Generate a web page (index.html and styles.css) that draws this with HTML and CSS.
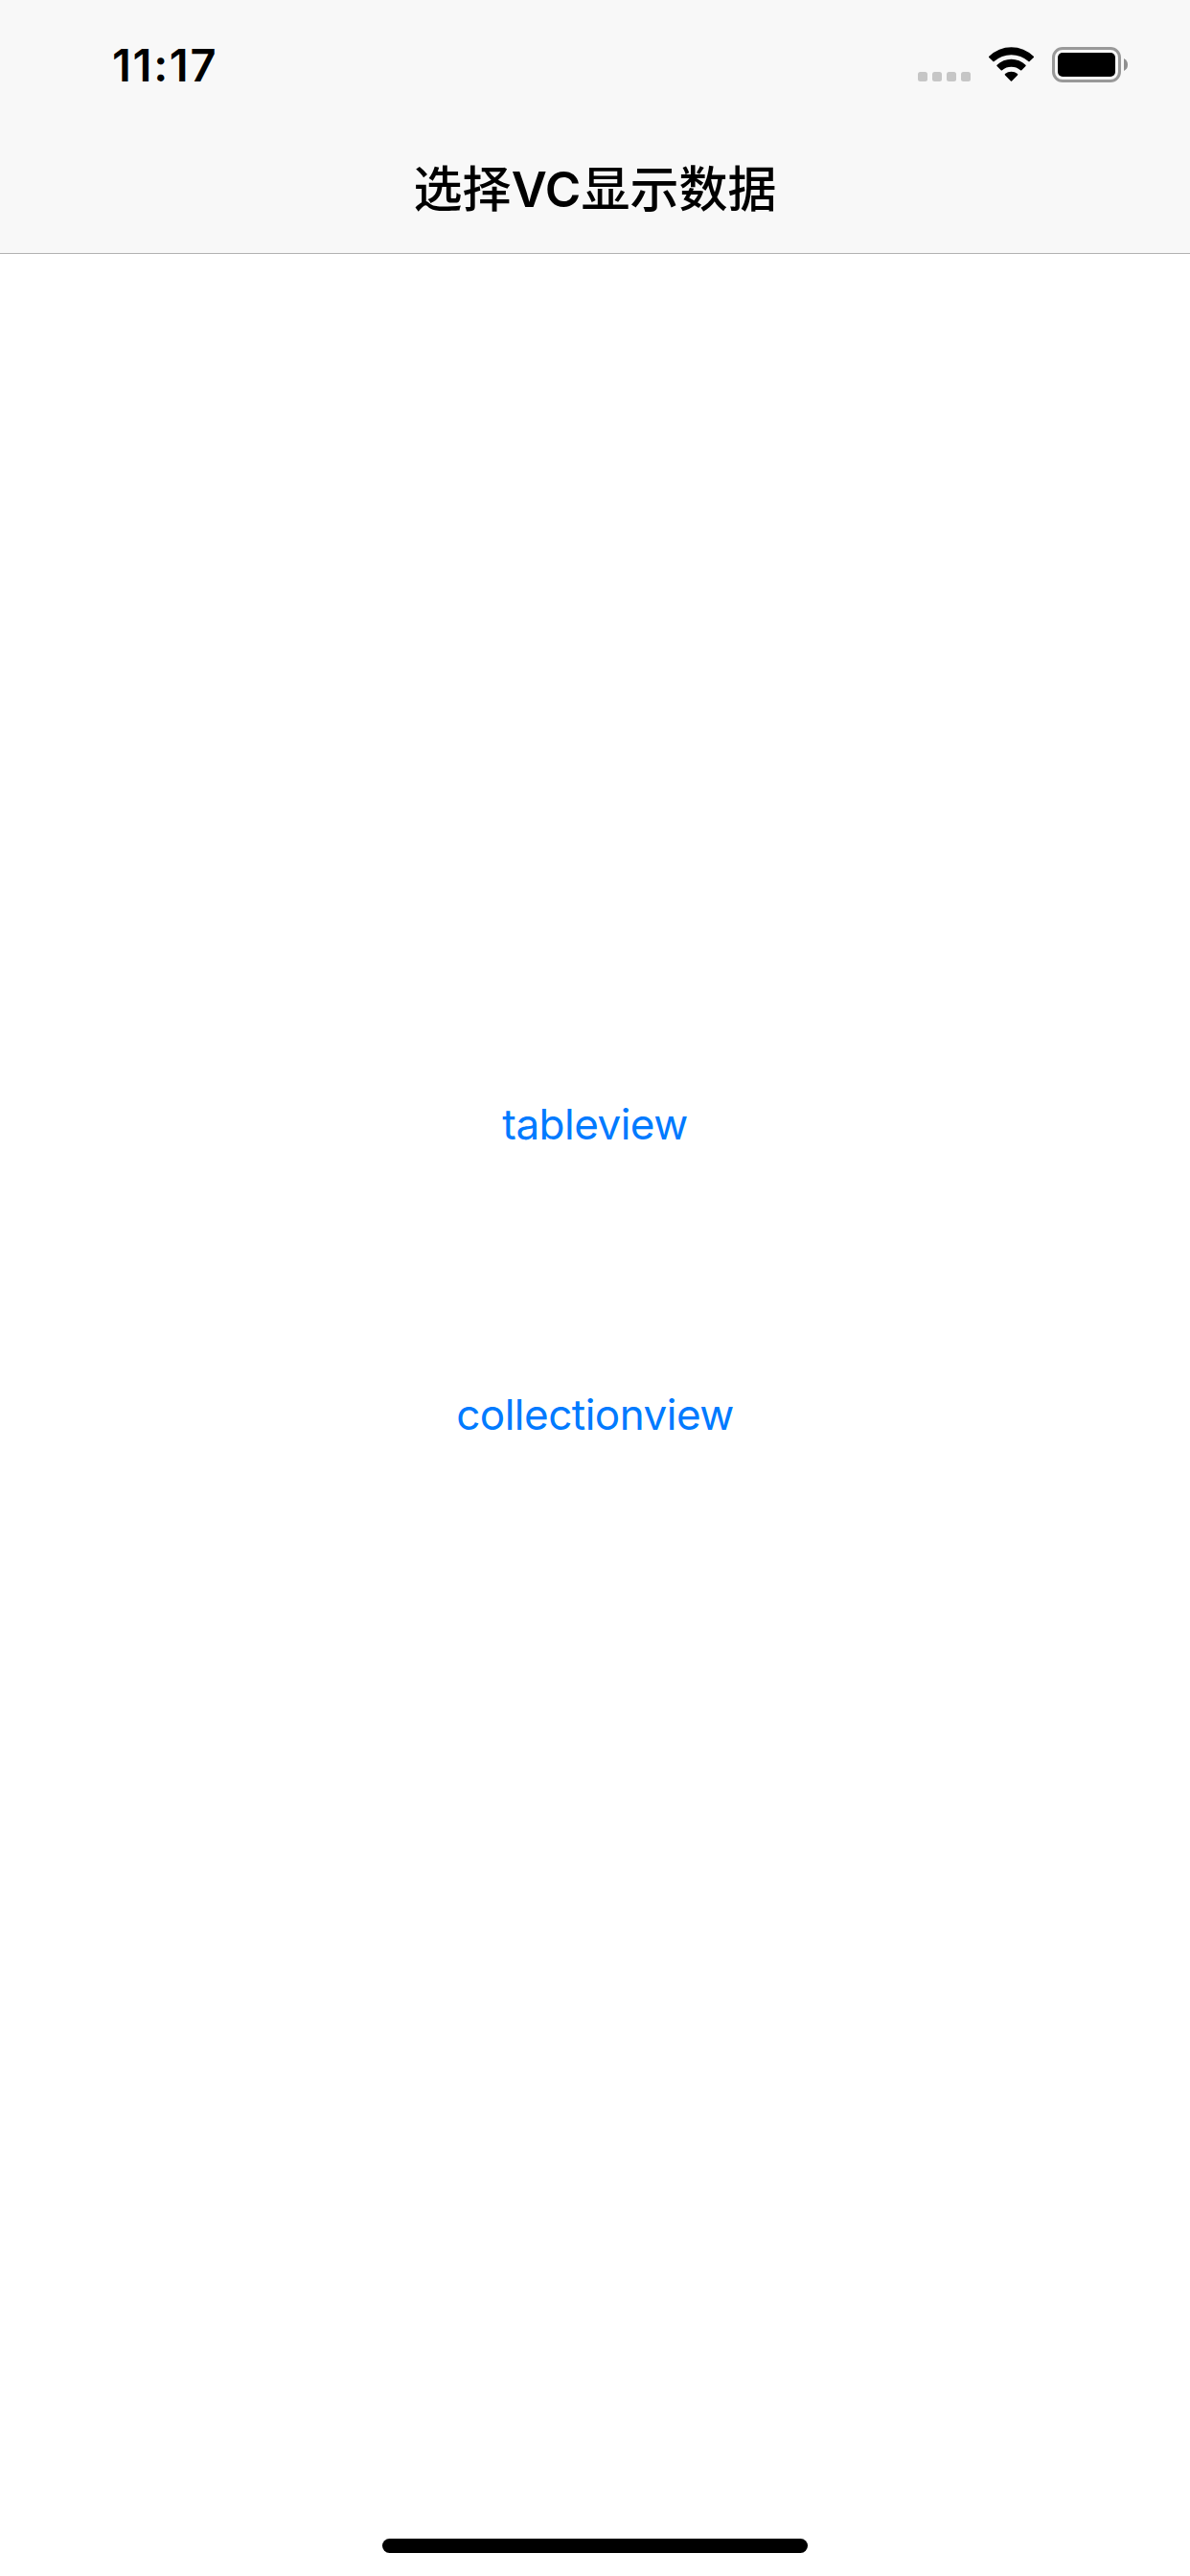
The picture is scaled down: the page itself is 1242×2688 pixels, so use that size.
FILE: index.html
```html
<!DOCTYPE html>
<html lang="zh-CN">
<head>
<meta charset="utf-8">
<title>选择VC显示数据</title>
<link rel="stylesheet" href="styles.css">
</head>
<body>
<div class="screen">
  <header class="top">
    <div class="status">
      <span class="time">11:17</span>
      <div class="indicators">
        <svg width="55" height="37" viewBox="0 0 55 37" fill="#c6c6c6"><rect x="0" y="26" width="10" height="10" rx="2.5"/><rect x="15" y="26" width="10" height="10" rx="2.5"/><rect x="30" y="26" width="10" height="10" rx="2.5"/><rect x="45" y="26" width="10" height="10" rx="2.5"/></svg>
        <svg width="47" height="37" viewBox="0 0 47 37"><path d="M.3 9.7A33 33 0 0 1 46.7 9.7Q47.4 10.3 46.8 10.9L42.6 15.1Q42 15.7 41.4 15.1A26.5 26.5 0 0 0 5.6 15.1Q5 15.7 4.4 15.1L.2 10.9Q-.4 10.3 .3 9.7Z"/><path d="M8.6 18.8A21.5 21.5 0 0 1 38.4 18.8Q39.1 19.5 38.5 20.1L34.3 24.2Q33.7 24.8 33 24.2A14.8 14.8 0 0 0 14 24.2Q13.3 24.8 12.7 24.2L8.5 20.1Q7.9 19.5 8.6 18.8Z"/><path d="M17 28.1A10.5 10.5 0 0 1 30 28.1Q30.7 28.7 30 29.4L24.1 35.4Q23.5 36 22.9 35.4L17 29.4Q16.3 28.7 17 28.1Z"/></svg>
        <svg width="79" height="37" viewBox="0 0 79 37"><rect x="1.5" y="1.5" width="69" height="34" rx="9.5" fill="none" stroke="#999" stroke-width="3"/><rect x="6" y="6" width="60" height="25" rx="5"/><path d="M75 12Q79 14 79 18.5T75 25Z" fill="#8f8f8f"/></svg>
      </div>
    </div>
    <h1 class="title">选择<span class="latin">VC</span>显示数据</h1>
  </header>
  <main class="content">
    <button class="link">tableview</button>
    <button class="link">collectionview</button>
  </main>
  <div class="home"></div>
</div>
</body>
</html>
```
FILE: styles.css
```css
body { margin: 0; }
.screen { width: 1242px; height: 2688px; display: flex; flex-direction: column; align-items: center; background: #fff; font-family: Inter, "Noto Sans CJK SC", sans-serif; }
.top { box-sizing: border-box; width: 100%; height: 265px; background: #f8f8f8; border-bottom: 1px solid #b2b2b2; }
.status { display: flex; justify-content: space-between; height: 132px; padding: 0 65px 0 117px; }
.time { font-size: 47px; line-height: 58px; font-weight: 600; letter-spacing: 1.7px; margin-top: 39px; }
.indicators { display: flex; gap: 19px; margin-top: 49px; }
.title { margin: 0; font-size: 51px; line-height: 132px; font-weight: 500; text-align: center; }
.latin { font-weight: 600; }
.content { flex: 1; display: flex; flex-direction: column; align-items: center; padding-top: 863px; gap: 213px; }
.link { border: 0; padding: 0; background: none; color: #007aff; font: 400 44px/90px Inter, sans-serif; letter-spacing: -0.5px; }
.home { width: 444px; height: 15px; border-radius: 8px; background: #000; margin-bottom: 24px; }
```
